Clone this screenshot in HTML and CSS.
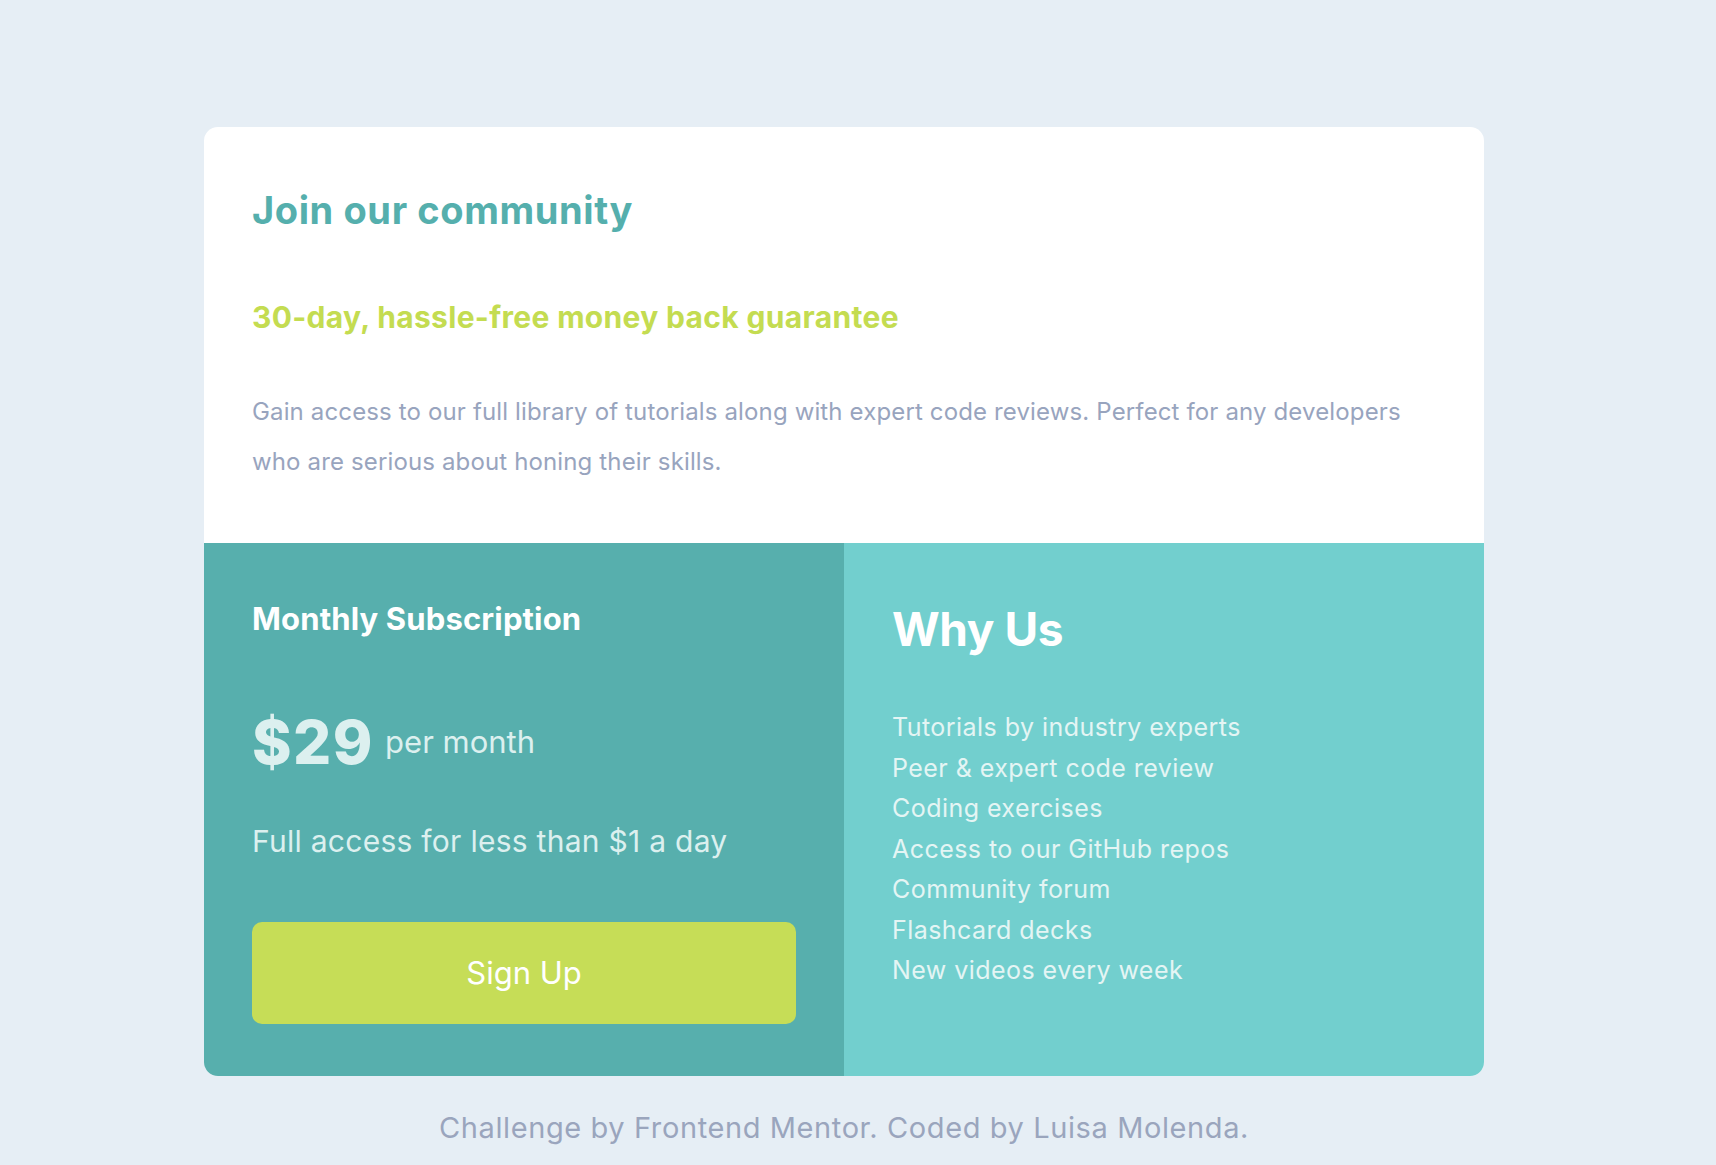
FILE: index.html
```html
<!DOCTYPE html>
<html lang="en">
<head>
<meta charset="utf-8">
<title>Single Price Grid Component</title>
<link rel="stylesheet" href="styles.css">
</head>
<body>
<main class="page">
  <section class="card">
    <div class="intro">
      <h1 class="intro-title">Join our community</h1>
      <h2 class="intro-tagline">30-day, hassle-free money back guarantee</h2>
      <p class="intro-text">Gain access to our full library of tutorials along with expert code reviews. Perfect for any developers who are serious about honing their skills.</p>
    </div>
    <div class="plans">
      <div class="subscription">
        <h3 class="subscription-title">Monthly Subscription</h3>
        <div class="price">
          <span class="price-amount">$29</span>
          <span class="price-period">per month</span>
        </div>
        <p class="subscription-note">Full access for less than $1 a day</p>
        <button class="signup" type="button">Sign Up</button>
      </div>
      <div class="why">
        <h3 class="why-title">Why Us</h3>
        <ul class="why-list">
          <li>Tutorials by industry experts</li>
          <li>Peer &amp; expert code review</li>
          <li>Coding exercises</li>
          <li>Access to our GitHub repos</li>
          <li>Community forum</li>
          <li>Flashcard decks</li>
          <li>New videos every week</li>
        </ul>
      </div>
    </div>
  </section>
  <footer class="attribution">Challenge by Frontend Mentor. Coded by Luisa Molenda.</footer>
</main>
</body>
</html>
```

FILE: styles.css
```css
* {
  box-sizing: border-box;
}

html, body {
  margin: 0;
  padding: 0;
}

body {
  background: #e6eef5;
  font-family: "Inter", "Lato", sans-serif;
  min-height: 1165px;
}

.page {
  width: 1280px;
  margin-left: 204px;
  padding-top: 127px;
}

.card {
  background: #ffffff;
  border-radius: 14px;
  overflow: hidden;
}

.intro {
  padding: 60px 48px 56px 48px;
}

.intro-title {
  margin: 0;
  font-size: 38px;
  line-height: 46px;
  font-weight: 700;
  letter-spacing: 0.6px;
  color: #55afad;
}

.intro-tagline {
  margin: 66px 0 0 0;
  font-size: 30px;
  line-height: 36px;
  font-weight: 700;
  letter-spacing: 0.33px;
  color: #c4dc51;
}

.intro-text {
  margin: 52px 0 0 0;
  font-size: 24px;
  line-height: 50px;
  font-weight: 400;
  letter-spacing: 0.14px;
  color: #98a4be;
}

.plans {
  display: grid;
  grid-template-columns: 640px 640px;
}

.subscription {
  background: #57afad;
  padding: 57px 48px 52px 48px;
}

.subscription-title {
  margin: 0;
  font-size: 31px;
  line-height: 38px;
  font-weight: 700;
  letter-spacing: 0.15px;
  color: #ffffff;
}

.price {
  display: flex;
  align-items: center;
  gap: 11px;
  margin-top: 74px;
  color: #dcf0ef;
}

.price-amount {
  font-size: 60px;
  line-height: 60px;
  font-weight: 800;
  letter-spacing: 1.5px;
}

.price-period {
  font-size: 31px;
  line-height: 38px;
  font-weight: 400;
}

.subscription-note {
  margin: 51px 0 0 0;
  font-size: 30px;
  line-height: 36px;
  letter-spacing: 0.27px;
  color: #dcf0ef;
}

.signup {
  display: flex;
  align-items: center;
  justify-content: center;
  width: 100%;
  height: 102px;
  margin-top: 63px;
  border: 0;
  border-radius: 10px;
  background: #c6dd57;
  color: #ffffff;
  font-family: inherit;
  font-size: 31px;
  line-height: 38px;
  font-weight: 400;
}

.why {
  background: #72cfce;
  padding: 58px 48px 48px 48px;
}

.why-title {
  margin: 0;
  font-size: 46px;
  line-height: 56px;
  font-weight: 700;
  letter-spacing: -0.4px;
  color: #ffffff;
}

.why-list {
  list-style: none;
  margin: 50px 0 0 0;
  padding: 0;
  font-size: 25px;
  line-height: 40.5px;
  letter-spacing: 0.45px;
  color: #e4f5f4;
}

.attribution {
  margin-top: 34px;
  text-align: center;
  font-size: 29px;
  line-height: 36px;
  letter-spacing: 0.6px;
  color: #9aa5bd;
}
```
